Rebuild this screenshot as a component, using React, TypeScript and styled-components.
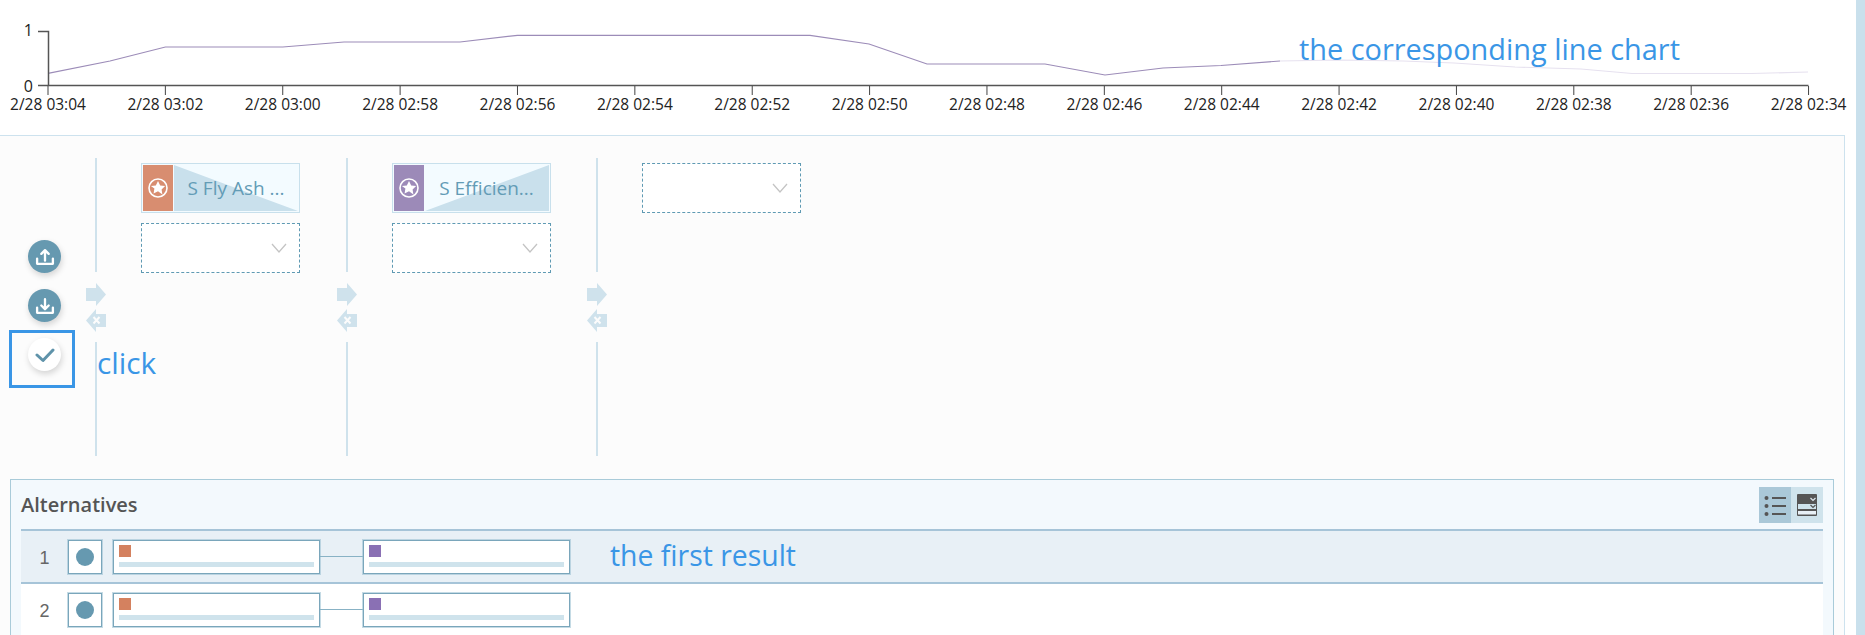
import React from "react";
import styled, { createGlobalStyle } from "styled-components";

const Global = createGlobalStyle`
  html, body { margin: 0; padding: 0; background: #fff; overflow: hidden; }
  body { font-family: "Open Sans", "Liberation Sans", sans-serif; }
`;

const Page = styled.div`
  position: relative;
  width: 1865px;
  height: 635px;
  overflow: hidden;
  background: #fff;
`;
const Content = styled.div`
  width: 1856px;
  height: 635px;
  display: flex;
  flex-direction: column;
`;
const ScrollTrack = styled.div`
  position: absolute;
  top: 0;
  right: 0;
  bottom: 0;
  width: 9px;
  background: #c9e0ec;
`;
const ChartSvg = styled.svg`
  display: block;
  flex: none;
  width: 1856px;
  height: 135px;
`;
const Note = styled.div<{ $x: number; $y: number; $size: number }>`
  position: absolute;
  left: ${(p) => p.$x}px;
  top: ${(p) => p.$y}px;
  font-size: ${(p) => p.$size}px;
  line-height: 36px;
  color: #3a96e6;
  font-family: "Open Sans", sans-serif;
  white-space: nowrap;
`;
const ClickFrame = styled.div`
  position: absolute;
  left: 9px;
  top: 330px;
  width: 60px;
  height: 52px;
  border: 3px solid #3a96e6;
`;
const Panel = styled.div`
  flex: 1;
  min-height: 0;
  margin-right: 11px;
  border-top: 1px solid #cde2ee;
  border-right: 1px solid #cde2ee;
  background: #fcfcfc;
  display: flex;
  flex-direction: column;
`;
const Builder = styled.div`
  flex: none;
  height: 343px;
  display: flex;
`;
const Toolbar = styled.div`
  flex: none;
  width: 95px;
  padding: 104px 0 0 28px;
  box-sizing: border-box;
  display: flex;
  flex-direction: column;
  gap: 16px;
`;
const Round = styled.div<{ $white?: boolean }>`
  width: 33px;
  height: 33px;
  border-radius: 50%;
  background: ${(p) => (p.$white ? "#fff" : "#6699b0")};
  box-shadow: 1px 3px 6px rgba(0, 0, 0, 0.16);
  color: ${(p) => (p.$white ? "#5f93aa" : "#fff")};
  display: flex;
  align-items: center;
  justify-content: center;
`;
const Column = styled.div`
  flex: none;
  width: 250.5px;
  display: flex;
`;
const Divider = styled.div`
  flex: none;
  width: 20px;
  margin-left: -9px;
  padding-top: 22px;
  display: flex;
  flex-direction: column;
  align-items: center;
`;
const Rule = styled.div<{ $h: number }>`
  width: 2px;
  height: ${(p) => p.$h}px;
  background: #cfe2ec;
`;
const Arrows = styled.div`
  display: flex;
  flex-direction: column;
  gap: 3px;
  margin: 11px 0 10px;
`;
const Slots = styled.div`
  padding: 27px 0 0 35px;
  display: flex;
  flex-direction: column;
  gap: 10px;
`;
const Chip = styled.div`
  position: relative;
  box-sizing: border-box;
  width: 159px;
  height: 50px;
  border: 1px solid #c8e0ec;
  background: #f3fbff;
  padding: 1px;
  display: flex;
`;
const ChipBadge = styled.div<{ $c: string }>`
  flex: none;
  width: 30px;
  margin-right: 1px;
  background: ${(p) => p.$c};
  display: flex;
  align-items: center;
  justify-content: center;
`;
const ChipWedge = styled.svg`
  position: absolute;
  left: 32px;
  top: 1px;
  width: 124px;
  height: 46px;
`;
const ChipLabel = styled.div`
  position: relative;
  flex: 1;
  text-align: center;
  font-size: 19px;
  line-height: 46px;
  color: #639cb6;
  white-space: nowrap;
`;
const Drop = styled.div`
  box-sizing: border-box;
  width: 159px;
  height: 50px;
  border: 1px dashed #5f9ab3;
  background: #fff;
  display: flex;
  align-items: center;
  justify-content: flex-end;
  padding-right: 12px;
`;
const AltPanel = styled.div`
  flex: 1;
  min-height: 0;
  margin: 0 10px 0 10px;
  border: 1px solid #a9cbd9;
  border-bottom: none;
  background: #f3f9fd;
  padding: 0 10px;
  display: flex;
  flex-direction: column;
`;
const AltHead = styled.div`
  flex: none;
  height: 49px;
  display: flex;
  align-items: center;
  justify-content: space-between;
`;
const AltTitle = styled.div`
  font-size: 20px;
  font-weight: 600;
  color: #555;
`;
const ViewSwitch = styled.div`
  display: flex;
  margin-top: 1px;
`;
const ViewBtn = styled.div<{ $on?: boolean }>`
  width: 32px;
  height: 36px;
  background: ${(p) => (p.$on ? "#aac8d8" : "#cfe3ec")};
  display: flex;
  align-items: center;
  justify-content: center;
`;
const Row = styled.div<{ $on?: boolean }>`
  flex: none;
  box-sizing: border-box;
  height: ${(p) => (p.$on ? "55px" : "60px")};
  background: ${(p) => (p.$on ? "#e8f0f6" : "#fff")};
  border-top: ${(p) => (p.$on ? "2px solid #a6c4d8" : "none")};
  border-bottom: ${(p) => (p.$on ? "2px solid #a6c4d8" : "none")};
  display: flex;
  align-items: flex-start;
  padding-top: 9px;
`;
const RowNum = styled.div`
  width: 47px;
  flex: none;
  text-align: center;
  font-family: "Liberation Sans", sans-serif;
  font-size: 18px;
  line-height: 36px;
  color: #666;
`;
const SeqBox = styled.div`
  box-sizing: border-box;
  flex: none;
  width: 34px;
  height: 34px;
  border: 1px solid #7aa6bb;
  box-shadow: 0 0 0 1px rgba(150, 190, 208, 0.55);
  background: #fff;
  display: flex;
  align-items: center;
  justify-content: center;
  margin-right: 11px;
`;
const Dot = styled.div`
  width: 18px;
  height: 18px;
  border-radius: 50%;
  background: #6699b0;
`;
const MiniCard = styled.div`
  box-sizing: border-box;
  flex: none;
  width: 207px;
  height: 34px;
  border: 1px solid #7aa6bb;
  box-shadow: 0 0 0 1px rgba(150, 190, 208, 0.55);
  background: #fff;
  padding: 4px 5px 0;
`;
const Swatch = styled.div<{ $c: string }>`
  width: 12px;
  height: 12px;
  background: ${(p) => p.$c};
`;
const MiniBar = styled.div`
  height: 5px;
  margin-top: 5px;
  background: #cfe3ec;
`;
const Link = styled.div`
  flex: none;
  width: 43px;
  height: 1px;
  margin-top: 16px;
  background: #88b2c5;
`;

const points: [number, number][] = [
  [48, 73.3], [110, 61], [165.4, 47], [282.8, 47], [344, 42], [460, 42], [517.4, 35.3],
  [810, 35.3], [869, 44], [927, 64], [1045, 64], [1105, 75], [1163, 68], [1221, 65.5], [1280, 61],
];
const faded: [number, number][] = [
  [1280, 61], [1340, 60], [1403, 61], [1454, 63], [1515, 67], [1581, 69], [1632, 73.5], [1751, 73.5], [1808, 72],
];
const poly = (p: [number, number][]) => p.map((q) => q.join(",")).join(" ");
const labels = ["03:04", "03:02", "03:00", "02:58", "02:56", "02:54", "02:52", "02:50", "02:48", "02:46", "02:44", "02:42", "02:40", "02:38", "02:36", "02:34"];

const Chart = () => (
  <ChartSvg viewBox="0 0 1856 135">
    <polyline points={poly(points)} fill="none" stroke="#9c8cb8" strokeWidth="1.2" />
    <polyline points={poly(faded)} fill="none" stroke="#e6e1ef" strokeWidth="1.2" />
    <path d="M38 31.5H48.5V86M38 85.5H1808.5" fill="none" stroke="#555" strokeWidth="1.5" />
    {labels.map((l, i) => {
      const x = 48 + i * 117.37;
      return (
        <g key={l}>
          <line x1={x} x2={x} y1="86" y2="95" stroke="#444" strokeWidth="1" />
          <text x={x} y="110" textAnchor="middle" fontSize="15.5" fill="#222" fontFamily="Open Sans, sans-serif">2/28 {l}</text>
        </g>
      );
    })}
    <text x="33" y="36" textAnchor="end" fontSize="16" fill="#222" fontFamily="Open Sans, sans-serif">1</text>
    <text x="33" y="91.5" textAnchor="end" fontSize="16" fill="#222" fontFamily="Open Sans, sans-serif">0</text>
  </ChartSvg>
);

const Upload = () => (
  <svg width="20" height="20" viewBox="0 0 19 19" fill="none" stroke="currentColor" strokeWidth="2.2" strokeLinecap="round" strokeLinejoin="round">
    <path d="M2 11v5h15v-5" />
    <path d="M9.5 13V3M6 6.5 9.5 3 13 6.5" />
  </svg>
);
const Download = () => (
  <svg width="20" height="20" viewBox="0 0 19 19" fill="none" stroke="currentColor" strokeWidth="2.2" strokeLinecap="round" strokeLinejoin="round">
    <path d="M2 11v5h15v-5" />
    <path d="M9.5 3v9M6 9l3.5 3.5L13 9" />
  </svg>
);
const Check = () => (
  <svg width="20" height="16" viewBox="0 0 20 16" fill="none" stroke="currentColor" strokeWidth="3" strokeLinecap="round" strokeLinejoin="round">
    <path d="M2 8l6 5.5L18 3" />
  </svg>
);
const Star = () => (
  <svg width="20" height="20" viewBox="0 0 20 20">
    <circle cx="10" cy="10" r="9" fill="none" stroke="#fff" strokeWidth="1.6" />
    <path d="M10 3l2.2 4.4 4.9.7-3.5 3.4.8 4.9L10 13.2l-4.4 2.2.8-4.9L2.9 8.1l4.9-.7z" fill="#fff" />
  </svg>
);
const Chevron = () => (
  <svg width="16" height="10" viewBox="0 0 16 10" fill="none" stroke="#c4c4c4" strokeWidth="1.3">
    <path d="M1 1l7 8 7-8" />
  </svg>
);
const ArrowRight = () => (
  <svg width="20" height="23" viewBox="0 0 20 23" style={{ display: "block" }}>
    <path d="M0 5h10V0l10 11.5L10 23v-5H0z" fill="#cfe2ec" />
  </svg>
);
const ArrowBack = () => (
  <svg width="20" height="23" viewBox="0 0 20 23" style={{ display: "block" }}>
    <path d="M20 5H10V0L0 11.5 10 23v-5h10z" fill="#cfe2ec" />
    <path d="M7.5 8l6 6.5M13.5 8l-6 6.5" stroke="#fcfcfc" strokeWidth="2" />
  </svg>
);
const ListIcon = () => (
  <svg width="22" height="22" viewBox="0 0 22 22" fill="#555">
    <circle cx="2.5" cy="4" r="2" /><circle cx="2.5" cy="12" r="2" /><circle cx="2.5" cy="20" r="2" />
    <rect x="8" y="3" width="14" height="2" /><rect x="8" y="11" width="14" height="2" /><rect x="8" y="19" width="14" height="2" />
  </svg>
);
const CardsIcon = () => (
  <svg width="20" height="22" viewBox="0 0 20 22">
    <rect x="0" y="0" width="20" height="22" rx="1" fill="#555" />
    <rect x="1" y="10" width="18" height="5" fill="#cfe3ec" />
    <rect x="1" y="17" width="18" height="3.5" fill="#e8f0f6" />
    <path d="M13.5 4l2.5 2.5L18.5 4" fill="none" stroke="#dfe9ef" strokeWidth="1.2" />
    <path d="M13.5 11l2.5 2.5 2.5-2.5" fill="none" stroke="#555" strokeWidth="1.2" />
  </svg>
);

const Divide = () => (
  <Divider>
    <Rule $h={114} />
    <Arrows><ArrowRight /><ArrowBack /></Arrows>
    <Rule $h={114} />
  </Divider>
);
const AltRow = ({ n, on }: { n: number; on?: boolean }) => (
  <Row $on={on}>
    <RowNum>{n}</RowNum>
    <SeqBox><Dot /></SeqBox>
    <MiniCard><Swatch $c="#d4815f" /><MiniBar /></MiniCard>
    <Link />
    <MiniCard><Swatch $c="#8a70b4" /><MiniBar /></MiniCard>
  </Row>
);

export default function App() {
  return (
    <Page>
      <Global />
      <Content>
        <Chart />
        <Panel>
          <Builder>
            <Toolbar>
              <Round><Upload /></Round>
              <Round><Download /></Round>
              <Round $white><Check /></Round>
            </Toolbar>
            <Column>
              <Divide />
              <Slots>
                <Chip>
                  <ChipBadge $c="#d88d70"><Star /></ChipBadge>
                  <ChipWedge viewBox="0 0 124 46" preserveAspectRatio="none"><path d="M0 0L124 46H0z" fill="#c9e0ec" /></ChipWedge>
                  <ChipLabel>S Fly Ash ...</ChipLabel>
                </Chip>
                <Drop><Chevron /></Drop>
              </Slots>
            </Column>
            <Column>
              <Divide />
              <Slots>
                <Chip>
                  <ChipBadge $c="#9c8ab8"><Star /></ChipBadge>
                  <ChipWedge viewBox="0 0 124 46" preserveAspectRatio="none"><path d="M0 46L124 0V46z" fill="#c9e0ec" /></ChipWedge>
                  <ChipLabel>S Efficien...</ChipLabel>
                </Chip>
                <Drop><Chevron /></Drop>
              </Slots>
            </Column>
            <Column>
              <Divide />
              <Slots>
                <Drop><Chevron /></Drop>
              </Slots>
            </Column>
          </Builder>
          <AltPanel>
            <AltHead>
              <AltTitle>Alternatives</AltTitle>
              <ViewSwitch>
                <ViewBtn $on><ListIcon /></ViewBtn>
                <ViewBtn><CardsIcon /></ViewBtn>
              </ViewSwitch>
            </AltHead>
            <AltRow n={1} on />
            <AltRow n={2} />
          </AltPanel>
        </Panel>
      </Content>
      <ScrollTrack />
      <ClickFrame />
      <Note $x={97} $y={345} $size={29.8}>click</Note>
      <Note $x={1299} $y={31} $size={28.9}>the corresponding line chart</Note>
      <Note $x={610} $y={537} $size={28.4}>the first result</Note>
    </Page>
  );
}
